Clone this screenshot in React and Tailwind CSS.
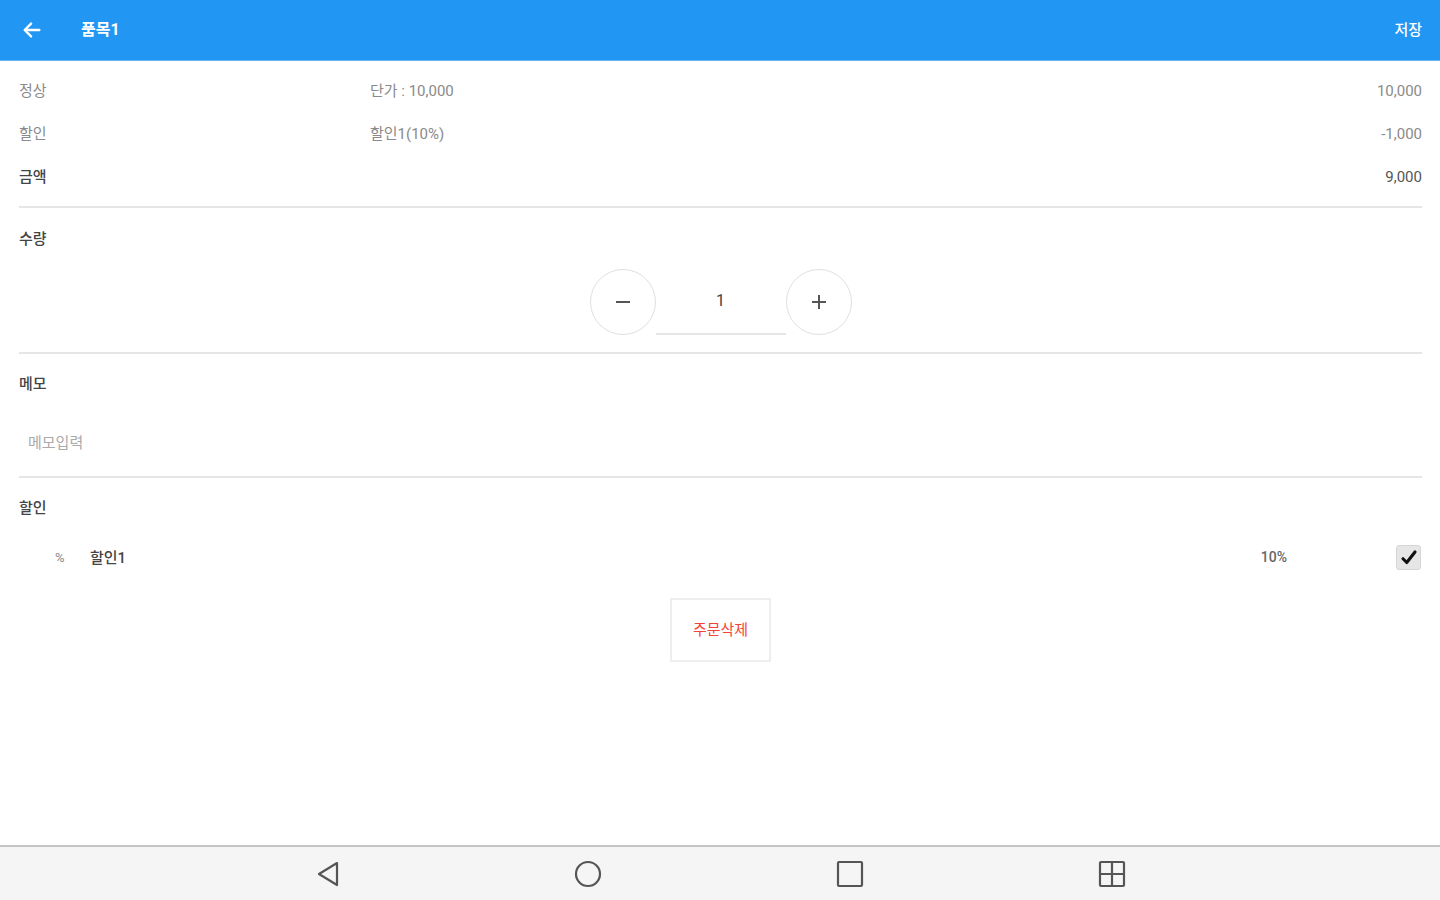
import React, { useState } from 'react';

const font = { fontFamily: 'Roboto, "Noto Sans CJK KR", "Noto Sans", sans-serif' };

const Divider = () => <div className="h-[2px] bg-[#e6e6e6]" />;

const SectionLabel = ({ children }) => (
  <div className="h-5 flex items-center text-[15px] text-[#444] font-medium">{children}</div>
);

const App = () => {
  const [qty, setQty] = useState(1);
  const [checked, setChecked] = useState(true);

  return (
    <div className="w-[1440px] h-[900px] bg-white flex flex-col overflow-hidden" style={font}>
      {/* toolbar */}
      <div className="h-[61px] bg-[#2196f3] border-b border-[#64b5f6] flex items-center pl-[21px] pr-[18px] shrink-0">
        <svg width="22" height="22" viewBox="0 0 24 24" fill="none" stroke="white" strokeWidth="2.6" strokeLinecap="round" strokeLinejoin="round">
          <path d="M20 12H5" />
          <path d="M11 5l-7 7 7 7" />
        </svg>
        <span className="ml-[38px] text-white text-[16px] font-bold">품목1</span>
        <span className="ml-auto text-white text-[15px] font-medium">저장</span>
      </div>

      <div className="flex-1 flex flex-col pl-[19px] pr-[18px]">
        {/* price rows */}
        <div className="pt-[9px] pb-[7px]">
          <div className="h-[43px] flex items-center text-[15px] text-[#8a8a8a]">
            <span className="w-[351px]">정상</span>
            <span>단가 : 10,000</span>
            <span className="ml-auto">10,000</span>
          </div>
          <div className="h-[43px] flex items-center text-[15px] text-[#8a8a8a]">
            <span className="w-[351px]">할인</span>
            <span>할인1(10%)</span>
            <span className="ml-auto">-1,000</span>
          </div>
          <div className="h-[43px] flex items-center text-[15px] text-[#555]">
            <span className="w-[351px] font-medium text-[#444]">금액</span>
            <span className="ml-auto">9,000</span>
          </div>
        </div>
        <Divider />

        {/* quantity */}
        <div className="pt-[21px] pb-[17px]">
          <SectionLabel>수량</SectionLabel>
          <div className="mt-[19px] flex justify-center items-center">
            <button
              onClick={() => setQty(Math.max(1, qty - 1))}
              className="w-[66px] h-[66px] rounded-full border border-[#e0e0e0] bg-white flex items-center justify-center"
            >
              <svg width="18" height="18" viewBox="0 0 18 18">
                <path d="M2 9h14" stroke="#555" strokeWidth="2" />
              </svg>
            </button>
            <div className="w-[130px] h-[67px] border-b-2 border-[#e6e6e6] flex items-center justify-center text-[16px] text-[#444]">
              {qty}
            </div>
            <button
              onClick={() => setQty(qty + 1)}
              className="w-[66px] h-[66px] rounded-full border border-[#e0e0e0] bg-white flex items-center justify-center"
            >
              <svg width="18" height="18" viewBox="0 0 18 18">
                <path d="M2 9h14M9 2v14" stroke="#555" strokeWidth="2" />
              </svg>
            </button>
          </div>
        </div>
        <Divider />

        {/* memo */}
        <div className="pt-[20px] pb-[21px]">
          <SectionLabel>메모</SectionLabel>
          <input
            placeholder="메모입력"
            className="mt-[39px] w-full h-5 pl-[9px] text-[15px] text-[#444] placeholder-[#aaa] outline-none"
            style={font}
          />
        </div>
        <Divider />

        {/* discount */}
        <div className="pt-[20px]">
          <SectionLabel>할인</SectionLabel>
          <div className="mt-[26px] h-7 flex items-center">
            <span className="ml-[36px] w-[35px] text-[13px] text-[#888]">%</span>
            <span className="text-[15px] text-[#444] font-medium">할인1</span>
            <span className="ml-auto text-[14px] text-[#666] font-medium">10%</span>
            <button
              onClick={() => setChecked(!checked)}
              className="ml-[109px] mr-[1px] w-[25px] h-[25px] rounded-[3px] bg-[#e6e6e6] border border-[#d6d6d6] flex items-center justify-center"
            >
              {checked && (
                <svg width="18" height="18" viewBox="0 0 24 24" fill="none" stroke="#111" strokeWidth="4.2" strokeLinecap="round" strokeLinejoin="round">
                  <path d="M4 13l5 5L20 4" />
                </svg>
              )}
            </button>
          </div>
          <div className="mt-[26px] flex justify-center">
            <button className="w-[101px] h-[64px] border-2 border-[#eeeeee] bg-white text-[#f44336] text-[15px]">
              주문삭제
            </button>
          </div>
        </div>
      </div>

      {/* android nav bar */}
      <div className="h-[55px] shrink-0 border-t-2 border-[#c4c4c4] bg-[#f5f5f5] flex items-center">
        <div className="w-[1440px] flex items-center">
          <div className="ml-[314px] w-[28px] flex justify-center">
            <svg width="26" height="28" viewBox="0 0 26 28" fill="none" stroke="#555" strokeWidth="2.2" strokeLinejoin="round">
              <path d="M22 3L4 14l18 11z" />
            </svg>
          </div>
          <div className="ml-[232px] w-[28px] flex justify-center">
            <svg width="28" height="28" viewBox="0 0 28 28" fill="none" stroke="#555" strokeWidth="2.2">
              <circle cx="14" cy="14" r="12" />
            </svg>
          </div>
          <div className="ml-[234px] w-[28px] flex justify-center">
            <svg width="28" height="28" viewBox="0 0 28 28" fill="none" stroke="#555" strokeWidth="2.2">
              <rect x="2" y="2" width="24" height="24" rx="1" />
            </svg>
          </div>
          <div className="ml-[234px] w-[28px] flex justify-center">
            <svg width="28" height="28" viewBox="0 0 28 28" fill="none" stroke="#555" strokeWidth="2.2">
              <rect x="2" y="2" width="24" height="24" rx="1" />
              <path d="M14 2v24M2 14h24" />
            </svg>
          </div>
        </div>
      </div>
    </div>
  );
};

export default App;
